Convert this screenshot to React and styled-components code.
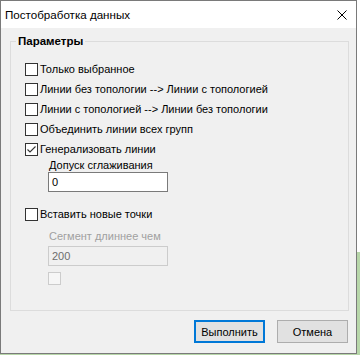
import React from 'react';
import styled, { createGlobalStyle } from 'styled-components';

const GlobalStyle = createGlobalStyle`
  html, body {
    margin: 0;
    padding: 0;
  }
  body {
    width: 360px;
    height: 355px;
    overflow: hidden;
    background: linear-gradient(to bottom, #ffffff 252px, #b7d6a9 252px);
    font-family: "Liberation Sans", Arial, sans-serif;
    font-size: 11px;
    color: #000;
  }
`;

const Window = styled.div`
  box-sizing: border-box;
  width: 357px;
  height: 354px;
  border: 1px solid #7a7a7a;
  background: #f0f0f0;
  display: flex;
  flex-direction: column;
`;

const TitleBar = styled.div`
  height: 27px;
  background: #fff;
  display: flex;
  align-items: center;
  justify-content: space-between;
  padding: 0 9px 0 4px;
`;

const Title = styled.span`
  font-size: 11.6px;
  color: #000;
`;

const Body = styled.div`
  flex: 1;
  display: flex;
  flex-direction: column;
  padding: 5px 7px 0 9px;
`;

const Group = styled.fieldset`
  box-sizing: border-box;
  margin: 0;
  height: 278px;
  border: 1px solid #dcdcdc;
  padding: 10px 0 0 14px;
  display: flex;
  flex-direction: column;
`;

const Legend = styled.legend`
  font-weight: bold;
  font-size: 11.5px;
  line-height: 16px;
  padding: 0 2px;
  margin-left: -9px;
`;

const Row = styled.label`
  display: flex;
  align-items: center;
  height: 20px;
  gap: 2px;
  margin-top: ${p => p.$gap || 0}px;
  color: ${p => (p.$disabled ? '#a0a0a0' : '#000')};
`;

const Box = styled.span`
  box-sizing: border-box;
  width: 13px;
  height: 13px;
  flex: none;
  background: ${p => (p.$disabled ? '#f6f6f6' : '#fff')};
  border: 1px solid ${p => (p.$disabled ? '#cccccc' : '#333333')};
  display: flex;
  align-items: center;
  justify-content: center;
`;

const Sub = styled.div`
  display: flex;
  flex-direction: column;
  align-items: flex-start;
  padding-left: 23px;
`;

const SubLabel = styled.div`
  line-height: 13px;
  margin: ${p => p.$top || 0}px 0 ${p => p.$bottom || 0}px 1px;
  color: ${p => (p.$disabled ? '#a0a0a0' : '#000')};
`;

const Field = styled.div`
  box-sizing: border-box;
  width: 120px;
  height: 20px;
  border: 1px solid ${p => (p.$disabled ? '#cccccc' : '#7a7a7a')};
  background: ${p => (p.$disabled ? '#f0f0f0' : '#fff')};
  color: ${p => (p.$disabled ? '#6d6d6d' : '#000')};
  display: flex;
  align-items: center;
  padding-left: 3px;
`;

const Buttons = styled.div`
  display: flex;
  justify-content: flex-end;
  gap: 12px;
  padding: 9px 1px 0 0;
`;

const Button = styled.button`
  box-sizing: border-box;
  width: 71px;
  height: 23px;
  padding: 0;
  font-family: inherit;
  font-size: 11px;
  color: #000;
  background: #e1e1e1;
  border: 1px solid ${p => (p.$primary ? '#0078d7' : '#adadad')};
  box-shadow: ${p => (p.$primary ? 'inset 0 0 0 1px #0078d7' : 'none')};
`;

function Check({ checked, disabled }) {
  return (
    <Box $disabled={disabled}>
      {checked && (
        <svg width="11" height="11" viewBox="0 0 11 11">
          <path d="M1.5 5.5 L4 8 L9.5 2.5" fill="none" stroke="#333" strokeWidth="1.1" />
        </svg>
      )}
    </Box>
  );
}

function CloseIcon() {
  return (
    <svg width="10" height="10" viewBox="0 0 10 10">
      <path d="M0.5 0.5 L9.5 9.5 M9.5 0.5 L0.5 9.5" stroke="#000" strokeWidth="1" />
    </svg>
  );
}

const options = [
  { text: 'Только выбранное' },
  { text: 'Линии без топологии --> Линии с топологией' },
  { text: 'Линии с топологией --> Линии без топологии' },
  { text: 'Объединить линии всех групп' },
  { text: 'Генерализовать линии', checked: true },
];

export default function App() {
  return (
    <>
      <GlobalStyle />
      <Window>
        <TitleBar>
          <Title>Постобработка данных</Title>
          <CloseIcon />
        </TitleBar>
        <Body>
          <Group>
            <Legend>Параметры</Legend>
            {options.map(o => (
              <Row key={o.text}>
                <Check checked={o.checked} />
                {o.text}
              </Row>
            ))}
            <Sub>
              <SubLabel>Допуск сглаживания</SubLabel>
              <Field>0</Field>
            </Sub>
            <Row $gap={12}>
              <Check />
              Вставить новые точки
            </Row>
            <Sub>
              <SubLabel $disabled $top={6} $bottom={3}>Сегмент длиннее чем</SubLabel>
              <Field $disabled>200</Field>
              <Row $gap={2}>
                <Check disabled />
              </Row>
            </Sub>
          </Group>
          <Buttons>
            <Button $primary>Выполнить</Button>
            <Button>Отмена</Button>
          </Buttons>
        </Body>
      </Window>
    </>
  );
}
